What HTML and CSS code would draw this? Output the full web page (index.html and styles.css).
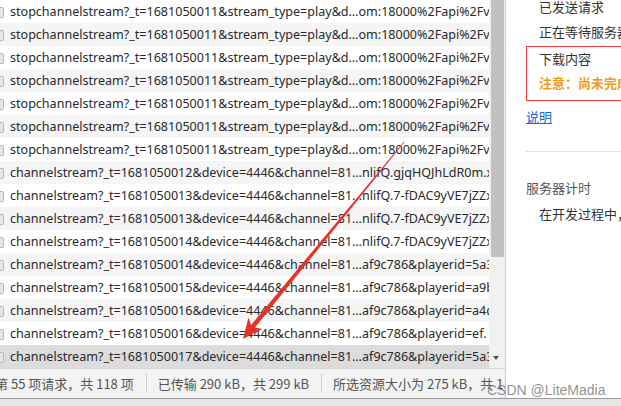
FILE: index.html
```html
<!DOCTYPE html>
<html lang="zh-CN">
<head>
<meta charset="utf-8">
<title>Network</title>
<link rel="stylesheet" href="styles.css">
</head>
<body>
<div class="screen">
  <div class="main">
    <div class="left">
      <div class="list-area">
        <div class="rows">
          <div class="row">stopchannelstream?_t=1681050011&amp;stream_type=play&amp;d…om:18000%2Fapi%2Fv1%2Fdevice</div>
          <div class="row">stopchannelstream?_t=1681050011&amp;stream_type=play&amp;d…om:18000%2Fapi%2Fv1%2Fdevice</div>
          <div class="row">stopchannelstream?_t=1681050011&amp;stream_type=play&amp;d…om:18000%2Fapi%2Fv1%2Fdevice</div>
          <div class="row">stopchannelstream?_t=1681050011&amp;stream_type=play&amp;d…om:18000%2Fapi%2Fv1%2Fdevice</div>
          <div class="row">stopchannelstream?_t=1681050011&amp;stream_type=play&amp;d…om:18000%2Fapi%2Fv1%2Fdevice</div>
          <div class="row">stopchannelstream?_t=1681050011&amp;stream_type=play&amp;d…om:18000%2Fapi%2Fv1%2Fdevice</div>
          <div class="row">stopchannelstream?_t=1681050011&amp;stream_type=play&amp;d…om:18000%2Fapi%2Fv1%2Fdevice</div>
          <div class="row">channelstream?_t=1681050012&amp;device=4446&amp;channel=81…nlifQ.gjqHQJhLdR0m.xyzQ</div>
          <div class="row">channelstream?_t=1681050013&amp;device=4446&amp;channel=81…nlifQ.7-fDAC9yVE7jZZxQw</div>
          <div class="row">channelstream?_t=1681050013&amp;device=4446&amp;channel=81…nlifQ.7-fDAC9yVE7jZZxQw</div>
          <div class="row">channelstream?_t=1681050014&amp;device=4446&amp;channel=81…nlifQ.7-fDAC9yVE7jZZxQw</div>
          <div class="row">channelstream?_t=1681050014&amp;device=4446&amp;channel=81…af9c786&amp;playerid=5a3e1</div>
          <div class="row">channelstream?_t=1681050015&amp;device=4446&amp;channel=81…af9c786&amp;playerid=a9b2c</div>
          <div class="row">channelstream?_t=1681050016&amp;device=4446&amp;channel=81…af9c786&amp;playerid=a4d0e</div>
          <div class="row">channelstream?_t=1681050016&amp;device=4446&amp;channel=81…af9c786&amp;playerid=ef.</div>
          <div class="row selected">channelstream?_t=1681050017&amp;device=4446&amp;channel=81…af9c786&amp;playerid=5a3e1</div>
        </div>
        <div class="scrollbar">
          <div class="thumb"></div>
          <div class="down"></div>
        </div>
      </div>
      <div class="status">
        <span class="stat first">第 55 项请求，共 118 项</span>
        <span class="sep"></span>
        <span class="stat">已传输 290 kB，共 299 kB</span>
        <span class="sep"></span>
        <span class="stat">所选资源大小为 275 kB，共 1.2 MB</span>
      </div>
    </div>
    <div class="panel">
      <div class="panel-inner">
        <div class="item">已发送请求</div>
        <div class="item">正在等待服务器响应</div>
        <div class="highlight">
          <div class="item-in">下载内容</div>
          <div class="item-in warn">注意：尚未完成</div>
        </div>
        <a class="link">说明</a>
        <div class="divider"></div>
        <div class="section">服务器计时</div>
        <div class="item">在开发过程中，可以使用 Server Timing API</div>
      </div>
    </div>
  </div>
  <div class="bottom"></div>
  <svg class="arrow" width="621" height="406" viewBox="0 0 621 406">
    <polygon points="404.4,142.3 404.0,141.5 251.0,325.0 248.5,317.5 243,339 262.5,329.0 255.0,327.5" fill="#e8312a"/>
  </svg>
  <div class="watermark">CSDN @LiteMadia</div>
</div>
</body>
</html>
```

FILE: styles.css
```css
* { box-sizing: border-box; }
html, body { margin: 0; padding: 0; background: #fff; }
.screen {
  position: relative;
  width: 621px;
  height: 406px;
  overflow: hidden;
  font-family: "Noto Sans", "Noto Sans CJK SC", sans-serif;
}
.main {
  display: flex;
  height: 398px;
}
.left {
  width: 506px;
  flex: none;
  display: flex;
  flex-direction: column;
  border-right: 1px solid #cbcbcb;
}
.list-area {
  display: flex;
  height: 368px;
}
.rows {
  width: 489px;
  flex: none;
  overflow: hidden;
}
.row {
  position: relative;
  height: 23px;
  line-height: 23px;
  padding-left: 10px;
  font-size: 12.55px;
  color: #2a2a2a;
  white-space: nowrap;
  overflow: hidden;
  background: #fff;
}
.row:nth-child(even) { background: #f5f5f5; }
.row.selected { background: #dcdcdc; }
.row::before {
  content: "";
  position: absolute;
  left: 0;
  top: 7px;
  width: 3px;
  height: 9px;
  background: #e6e6e6;
  border: 1px solid #b8b8b8;
  border-left: none;
  border-radius: 0 2px 2px 0;
}
.scrollbar {
  width: 16px;
  flex: none;
  background: #f1f1f1;
  display: flex;
  flex-direction: column;
}
.thumb {
  margin-left: 2px;
  width: 13px;
  height: 257px;
  background: #c1c1c1;
}
.down {
  margin-top: 99px;
  margin-left: 4px;
  width: 0;
  height: 0;
  border-left: 3.5px solid transparent;
  border-right: 3.5px solid transparent;
  border-top: 4px solid #505050;
}
.status {
  height: 30px;
  border-top: 1px solid #d4d4d4;
  background: #f3f3f3;
  display: flex;
  align-items: center;
  font-size: 13px;
  color: #555;
  white-space: nowrap;
  overflow: hidden;
  font-family: "Noto Sans CJK SC", sans-serif;
}
.stat { flex: none; }
.stat.first { margin-left: -5px; }
.sep {
  flex: none;
  width: 1px;
  height: 19px;
  background: #d0d0d0;
  margin: 0 11px 0 12px;
}
.panel {
  flex: 1;
  overflow: hidden;
  background: #fff;
  font-family: "Noto Sans CJK SC", sans-serif;
  font-size: 13px;
  color: #333;
}
.panel-inner {
  margin-top: -6px;
  padding-left: 20px;
  width: 220px;
}
.item {
  height: 25px;
  line-height: 25px;
  padding-left: 13px;
  white-space: nowrap;
}
.highlight {
  margin-top: 2px;
  border: 1px solid #ee3b3b;
  border-right: none;
  padding: 0 0 5px 12px;
  width: 200px;
}
.item-in {
  height: 24px;
  line-height: 23px;
  white-space: nowrap;
}
.item-in.warn {
  color: #f39a1e;
  font-weight: bold;
}
.link {
  display: block;
  margin-top: 4px;
  height: 24px;
  line-height: 24px;
  color: #1a5fd6;
  text-decoration: underline;
}
.divider {
  margin-top: 22px;
  height: 1px;
  background: #e2e2e2;
}
.section {
  margin-top: 24px;
  height: 25px;
  line-height: 24px;
  color: #555;
}
.bottom {
  height: 8px;
  border-top: 1px solid #9a9a9a;
  background: #e6e6e6;
}
.arrow {
  position: absolute;
  left: 0;
  top: 0;
  pointer-events: none;
}
.watermark {
  position: absolute;
  left: 487px;
  top: 382px;
  font-family: "Liberation Sans", sans-serif;
  font-size: 14px;
  line-height: 17px;
  color: rgba(110, 110, 110, 0.75);
  white-space: nowrap;
}
```
